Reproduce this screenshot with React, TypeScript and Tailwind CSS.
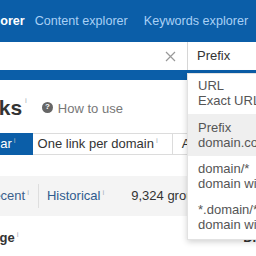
import React from "react";

const Sup = ({ className = "" }: { className?: string }) => (
  <sup className={`text-[8px] text-[#aab4c0] ml-[2px] relative -top-[3px] ${className}`}>i</sup>
);

export default function App() {
  return (
    <div className="w-[256px] h-[256px] overflow-hidden relative bg-white font-['Liberation_Sans',Arial,sans-serif] text-[13px]">
      {/* Top nav */}
      <div className="bg-[#0b5ea8]">
        <div className="h-[42px] flex items-center whitespace-nowrap ml-[-53px] text-[12.6px]">
          <span className="text-white font-bold">Site Explorer</span>
          <span className="ml-[10px] text-[#a9d0f5]">Content explorer</span>
          <span className="ml-[16px] text-[#a9d0f5]">Keywords explorer</span>
          <span className="ml-[16px] text-[#a9d0f5]">Rank tracker</span>
        </div>
        <div className="pb-[10px]">
          <div className="h-[28px] bg-white flex items-center">
            <div className="flex-1 flex items-center justify-end pr-[11px]">
              <svg width="11" height="11" viewBox="0 0 11 11" className="text-[#999]">
                <path d="M1 1L10 10M10 1L1 10" stroke="currentColor" strokeWidth="1.2" />
              </svg>
            </div>
            <div className="w-[69px] h-full border-l border-[#d6d6d6] flex items-center pl-[9px] text-[#333] whitespace-nowrap">
              Prefix
            </div>
          </div>
        </div>
      </div>

      {/* Title row */}
      <div className="flex items-center whitespace-nowrap ml-[-76px] mt-[15px] h-[24px]">
        <span className="text-[21px] font-bold text-[#333] leading-none">Backlinks</span>
        <sup className="text-[8px] text-[#aab4c0] ml-[3px] relative -top-[6px]">i</sup>
        <span className="ml-[15px] inline-flex items-center justify-center w-[11px] h-[11px] rounded-full bg-[#666] text-white text-[8px] font-bold leading-none">?</span>
        <span className="ml-[5px] text-[#777] mt-[3px]">How to use</span>
      </div>

      {/* Tabs */}
      <div className="mt-[14px] flex h-[22px] border-y border-[#dcdcdc] whitespace-nowrap ml-[-41px]">
        <div className="bg-[#0b5ea8] text-white flex items-center pl-[8px] pr-[17px] -my-px">
          Popular<Sup className="text-[#8fbce6]" />
        </div>
        <div className="flex items-center pl-[5px] pr-[14px] border-r border-[#dcdcdc] text-[#333]">
          One link per domain<Sup />
        </div>
        <div className="flex items-center pl-[9px] text-[#333]">All</div>
      </div>

      {/* Gray band */}
      <div className="mt-[21px] h-[40px] bg-[#f4f4f4] flex items-center whitespace-nowrap ml-[-16px]">
        <span className="text-[#3a5f8c]">Recent</span>
        <Sup />
        <span className="ml-[9px] w-px h-[24px] bg-[#dedede]"></span>
        <span className="ml-[8px] text-[#2f5b8e]">Historical</span>
        <Sup />
        <span className="ml-[27px] text-[#333]">9,324 groups of links</span>
      </div>

      {/* Header row */}
      <div className="mt-[14px] flex items-center whitespace-nowrap h-[16px]">
        <span className="ml-[-77px] font-bold text-[#333]">Referring page</span>
        <Sup />
        <span className="ml-auto mr-[-6px] font-bold text-[#333]">DR</span>
      </div>

      {/* Dropdown */}
      <div className="absolute left-[187px] top-[73px] w-[90px] bg-white border border-[#e2e2e2] shadow-[0_2px_6px_rgba(0,0,0,0.18)] text-[#555] whitespace-nowrap leading-[15px]">
        <div className="pl-[10px] pt-[4px] pb-[6px]">
          <div>URL</div>
          <div>Exact URL</div>
        </div>
        <div className="pl-[10px] pt-[6px] pb-[6px] bg-[#efefef]">
          <div>Prefix</div>
          <div>domain.com/path/*</div>
        </div>
        <div className="pl-[10px] pt-[5px] pb-[5px]">
          <div>domain/*</div>
          <div>domain with all its paths</div>
        </div>
        <div className="pl-[10px] pt-[6px] pb-[7px]">
          <div>*.domain/*</div>
          <div>domain with all its subdomains</div>
        </div>
      </div>
    </div>
  );
}
